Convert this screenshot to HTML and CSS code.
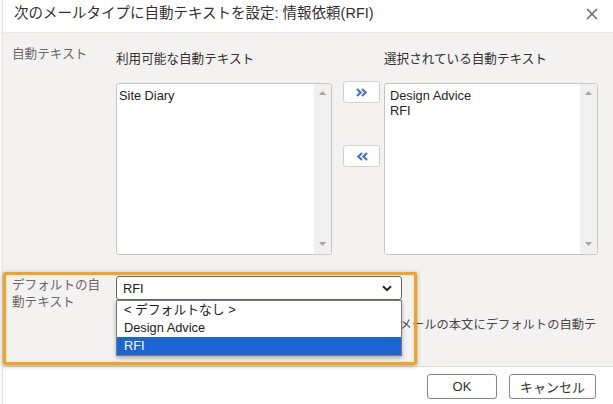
FILE: index.html
```html
<!DOCTYPE html>
<html lang="ja">
<head>
<meta charset="utf-8">
<title>自動テキストを設定</title>
<link rel="stylesheet" href="styles.css">
</head>
<body>
<div class="page">
  <div class="edge"></div>
  <div class="dialog">
    <header class="titlebar">
      <h1 class="title">次のメールタイプに自動テキストを設定: 情報依頼(RFI)</h1>
      <button class="close" aria-label="閉じる">
        <svg width="12" height="12" viewBox="0 0 12 12"><path d="M1 1L11 11M11 1L1 11" stroke="#666" stroke-width="1.5" fill="none"/></svg>
      </button>
    </header>
    <main class="body">
      <div class="row">
        <div class="label">自動テキスト</div>
        <div class="picker">
          <div class="col col-avail">
            <div class="heading">利用可能な自動テキスト</div>
            <div class="listbox">
              <div class="items"><div class="item">Site Diary</div></div>
              <div class="scroll">
                <svg width="7" height="4" viewBox="0 0 7 4"><path d="M0 4L3.5 0L7 4Z" fill="#a6a6a6"/></svg>
                <svg width="7" height="4" viewBox="0 0 7 4"><path d="M0 0L3.5 4L7 0Z" fill="#a6a6a6"/></svg>
              </div>
            </div>
          </div>
          <div class="movers">
            <button class="mover" aria-label="追加">
              <svg width="12" height="9" viewBox="0 0 12 9"><path d="M1 1L4.6 4.5L1 8M6 1L9.6 4.5L6 8" stroke="#4b6fd4" stroke-width="2.2" fill="none"/></svg>
            </button>
            <button class="mover" aria-label="削除">
              <svg width="12" height="9" viewBox="0 0 12 9"><path d="M11 1L7.4 4.5L11 8M6 1L2.4 4.5L6 8" stroke="#4b6fd4" stroke-width="2.2" fill="none"/></svg>
            </button>
          </div>
          <div class="col col-sel">
            <div class="heading">選択されている自動テキスト</div>
            <div class="listbox">
              <div class="items"><div class="item">Design Advice</div><div class="item">RFI</div></div>
              <div class="scroll">
                <svg width="7" height="4" viewBox="0 0 7 4"><path d="M0 4L3.5 0L7 4Z" fill="#a6a6a6"/></svg>
                <svg width="7" height="4" viewBox="0 0 7 4"><path d="M0 0L3.5 4L7 0Z" fill="#a6a6a6"/></svg>
              </div>
            </div>
          </div>
        </div>
      </div>
      <div class="row row-default">
        <div class="label label-default">デフォルトの自動テキスト</div>
        <div class="default-field">
          <div class="select">
            <span>RFI</span>
            <svg width="10" height="7" viewBox="0 0 10 7"><path d="M1 1.2L5 5.2L9 1.2" stroke="#222" stroke-width="2" fill="none"/></svg>
          </div>
          <div class="dropdown">
            <div class="option">&lt; デフォルトなし &gt;</div>
            <div class="option">Design Advice</div>
            <div class="option selected">RFI</div>
          </div>
          <div class="insert-row">新規メールの本文にデフォルトの自動テキストを挿入する</div>
        </div>
      </div>
    </main>
    <footer class="footer">
      <button class="btn btn-ok">OK</button>
      <button class="btn btn-cancel">キャンセル</button>
    </footer>
  </div>
  <div class="highlight"></div>
</div>
</body>
</html>
```
FILE: styles.css
```css
* { box-sizing: border-box; }
html, body { margin: 0; padding: 0; }
body {
  width: 613px;
  height: 404px;
  overflow: hidden;
  background: #fff;
  font-family: "Liberation Sans", "Noto Sans CJK JP", sans-serif;
  color: #323130;
}
button { font-family: inherit; cursor: pointer; }

.page {
  position: relative;
  display: flex;
  width: 613px;
  height: 404px;
}
.edge {
  width: 2px;
  flex: none;
  background: #f8f8f8;
}
.dialog {
  flex: 1;
  min-width: 0;
  display: flex;
  flex-direction: column;
  border-left: 1px solid #e3e3e3;
}

.titlebar {
  height: 33px;
  flex: none;
  display: flex;
  justify-content: space-between;
  align-items: flex-start;
  padding: 4px 0 0 11px;
  background: #fff;
  border-bottom: 1px solid #e8e8e8;
}
.title {
  margin: 0;
  font-size: 14.5px;
  font-weight: normal;
  line-height: 19px;
  color: #323130;
  white-space: nowrap;
}
.close {
  margin: 4px 15px 0 0;
  padding: 0;
  width: 12px;
  height: 12px;
  border: 0;
  background: transparent;
  display: flex;
}

.body {
  flex: 1;
  background: #f3f2f1;
  padding: 13px 0 0 9px;
  overflow: hidden;
}
.row { display: flex; }
.label {
  width: 104px;
  flex: none;
  font-size: 12.6px;
  line-height: 17px;
  color: #6b6967;
}
.picker {
  display: flex;
  align-items: flex-start;
}
.heading {
  margin: 5px 0 15px;
  font-size: 12.6px;
  line-height: 17px;
  color: #323130;
  white-space: nowrap;
}
.listbox {
  height: 172px;
  display: flex;
  background: #fff;
  border: 1px solid #c8c6c4;
  border-radius: 3px;
  overflow: hidden;
}
.col-avail .listbox { width: 216px; }
.col-sel .listbox { width: 214px; }
.items {
  flex: 1;
  padding: 4px 2px;
  font-size: 12.8px;
  line-height: 15px;
  color: #252423;
}
.col-sel .items { padding-left: 5px; }
.scroll {
  width: 17px;
  flex: none;
  background: #f0f0f0;
  display: flex;
  flex-direction: column;
  justify-content: space-between;
  align-items: center;
  padding: 7px 0 8px;
}
.movers {
  display: flex;
  flex-direction: column;
  gap: 42px;
  margin: 35px 4px 0 11px;
}
.mover {
  width: 37px;
  height: 22px;
  padding: 0;
  background: #fff;
  border: 1px solid #d2d0ce;
  border-radius: 3px;
  display: flex;
  align-items: center;
  justify-content: center;
}

.row-default { margin-top: 21px; }
.label-default {
  padding: 1px 9px 0 0;
  line-height: 16.5px;
}
.default-field {
  position: relative;
  width: 481px;
}
.select {
  width: 286px;
  height: 24px;
  display: flex;
  align-items: center;
  justify-content: space-between;
  padding: 0 9px 0 6px;
  background: #fff;
  border: 1px solid #5f6b5a;
  border-radius: 3px;
  font-size: 12.8px;
  color: #202020;
}
.dropdown {
  position: absolute;
  top: 24px;
  left: 0;
  width: 286px;
  z-index: 2;
  background: #fff;
  border: 1px solid #7a7a7a;
  box-shadow: 0 2px 4px rgba(0, 0, 0, 0.3);
}
.option {
  height: 18px;
  line-height: 18px;
  padding-left: 7px;
  font-size: 12.8px;
  color: #202020;
}
.option.selected {
  background: #1b66d3;
  color: #fff;
}
.insert-row {
  margin-top: 17px;
  padding-left: 259px;
  font-size: 12.3px;
  line-height: 17px;
  color: #4a4846;
  white-space: nowrap;
  overflow: hidden;
}

.footer {
  height: 38px;
  flex: none;
  display: flex;
  justify-content: flex-end;
  align-items: flex-start;
  gap: 12px;
  padding: 7px 17px 0 0;
  background: #fff;
  border-top: 1px solid #dedede;
}
.btn {
  height: 25px;
  padding: 0;
  background: #fff;
  border: 1px solid #8a8886;
  border-radius: 3px;
  font-size: 13px;
  color: #323130;
}
.btn-ok { width: 70px; }
.btn-cancel { width: 87px; }

.highlight {
  position: absolute;
  left: 3px;
  top: 272px;
  width: 414px;
  height: 93px;
  border: 3px solid #f5a21c;
  border-radius: 2px;
  box-shadow: 0 1px 4px rgba(0, 0, 0, 0.35), inset 0 0 2px rgba(0, 0, 0, 0.15);
  pointer-events: none;
  z-index: 3;
}
```
